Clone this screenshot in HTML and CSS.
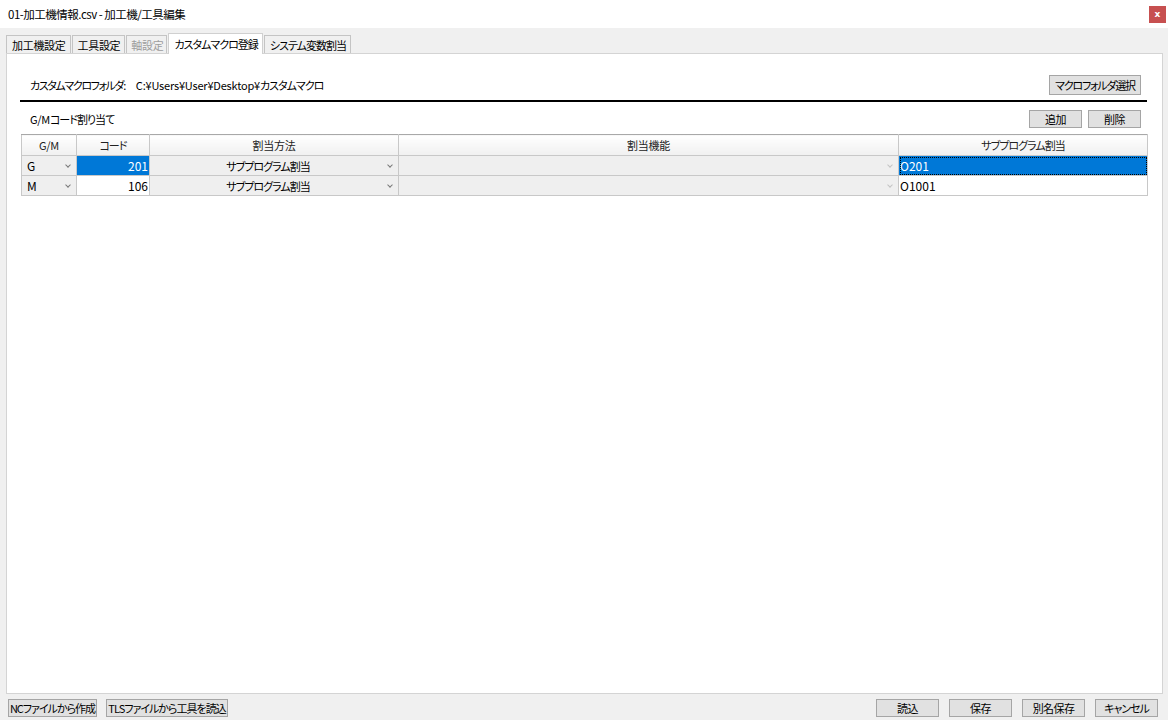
FILE: index.html
```html
<!DOCTYPE html>
<html lang="ja">
<head>
    <meta charset="UTF-8">
    <title>01-加工機情報.csv - 加工機/工具編集</title>
    <link rel="stylesheet" href="styles.css">
</head>
<body>
    <div class="titlebar">
        <span class="title">01-加工機情報.csv - 加工機/工具編集</span>
        <span class="close">x</span>
    </div>

    <div class="tabs">
        <div class="tab">加工機設定</div>
        <div class="tab">工具設定</div>
        <div class="tab disabled">軸設定</div>
        <div class="tab active kana">カスタムマクロ登録</div>
        <div class="tab kana">システム変数割当</div>
    </div>

    <div class="panel">
        <div class="folder-row">
            <span class="folder-label">カスタムマクロフォルダ:</span>
            <span class="folder-path">C:¥Users¥User¥Desktop¥<span class="kana">カスタムマクロ</span></span>
            <button class="btn btn-folder">マクロフォルダ選択</button>
        </div>

        <div class="rule"></div>

        <div class="assign-row">
            <span class="assign-label">G/M<span class="kana">コード割り当て</span></span>
            <button class="btn btn-small">追加</button>
            <button class="btn btn-small">削除</button>
        </div>

        <table class="grid">
            <colgroup>
                <col style="width: 55px">
                <col style="width: 73px">
                <col style="width: 249px">
                <col style="width: 500px">
                <col style="width: 249px">
            </colgroup>
            <thead>
                <tr>
                    <th>G/M</th>
                    <th class="kana">コード</th>
                    <th>割当方法</th>
                    <th>割当機能</th>
                    <th class="kana">サブプログラム割当</th>
                </tr>
            </thead>
            <tbody>
                <tr>
                    <td class="combo left">G<span class="chev"></span></td>
                    <td class="num selected">201</td>
                    <td class="combo kana">サブプログラム割当<span class="chev"></span></td>
                    <td class="combo off"><span class="chev"></span></td>
                    <td class="text selected focus">O201</td>
                </tr>
                <tr>
                    <td class="combo left">M<span class="chev"></span></td>
                    <td class="num">106</td>
                    <td class="combo kana">サブプログラム割当<span class="chev"></span></td>
                    <td class="combo off"><span class="chev"></span></td>
                    <td class="text">O1001</td>
                </tr>
            </tbody>
        </table>
    </div>

    <div class="bottom-bar">
        <button class="btn btn-nc">NCファイルから作成</button>
        <button class="btn btn-tls">TLSファイルから工具を読込</button>
        <div class="spacer"></div>
        <button class="btn btn-action">読込</button>
        <button class="btn btn-action">保存</button>
        <button class="btn btn-action">別名保存</button>
        <button class="btn btn-action kana">キャンセル</button>
    </div>
</body>
</html>
```

FILE: styles.css
```css
body {
    font-family: "Noto Sans CJK JP", "Noto Sans", sans-serif;
    font-size: 11px;
    font-feature-settings: "palt";
    letter-spacing: -0.3px;
    color: #000;
    background-color: #f0f0f0;
    margin: 0;
    padding: 0;
    width: 1168px;
    height: 720px;
    overflow: hidden;
}

.kana {
    letter-spacing: -1px;
}

.titlebar {
    height: 28px;
    background-color: #fff;
    display: flex;
    align-items: center;
    justify-content: space-between;
    padding-left: 8px;
    padding-right: 2px;
}

.title {
    font-size: 11.5px;
    letter-spacing: -0.5px;
}

.close {
    width: 17px;
    height: 17px;
    background-color: #c75050;
    color: #fff;
    font-family: "DejaVu Sans", sans-serif;
    font-size: 9px;
    font-weight: bold;
    letter-spacing: 0;
    display: flex;
    align-items: center;
    justify-content: center;
    line-height: 1;
}

.tabs {
    display: flex;
    align-items: flex-end;
    height: 25px;
    padding-left: 6px;
    position: relative;
    z-index: 1;
}

.tab {
    height: 18px;
    box-sizing: border-box;
    border: 1px solid #c4c4c4;
    border-bottom: none;
    background-color: #f0f0f0;
    padding: 0 4px 0 5px;
    margin-right: 1px;
    display: flex;
    align-items: center;
    font-size: 11px;
    white-space: nowrap;
}

.tab.disabled {
    color: #9d9d9d;
    padding: 0 3px 0 4px;
}

.tab.active {
    height: 21px;
    background-color: #fff;
    border-color: #d0d0d0;
    margin-bottom: -1px;
    padding-bottom: 1px;
}

.panel {
    height: 641px;
    box-sizing: border-box;
    margin: 0 5px 0 6px;
    border: 1px solid #d4d4d4;
    background-color: #fff;
    padding: 21px 15px 0 13px;
}

.folder-row {
    display: flex;
    align-items: center;
    height: 20px;
    padding: 0 6px 0 10px;
}

.folder-label {
    margin-right: 11px;
    letter-spacing: -1.4px;
}

.folder-path {
    flex: 1;
    letter-spacing: -0.2px;
}

.btn {
    font-family: inherit;
    font-size: 11px;
    font-feature-settings: "palt";
    letter-spacing: -0.6px;
    white-space: nowrap;
    overflow: hidden;
    color: #000;
    background-color: #e1e1e1;
    border: 1px solid #a5a5a5;
    border-radius: 0;
    padding: 0;
    height: 18px;
    line-height: 15px;
}

.btn.kana {
    letter-spacing: -1px;
}

.btn-folder {
    width: 92px;
    height: 20px;
    letter-spacing: -1.2px;
}

.rule {
    margin-top: 5px;
    height: 2px;
    background-color: #000;
}

.assign-row {
    display: flex;
    align-items: center;
    gap: 6px;
    height: 18px;
    margin-top: 8px;
    padding: 0 6px 0 10px;
}

.assign-label {
    flex: 1;
}

.btn-small {
    width: 53px;
}

.grid {
    margin-top: 6px;
    margin-left: 1px;
    border-collapse: collapse;
    table-layout: fixed;
    width: 1126px;
    border: 1px solid #a8a8a8;
}

.grid th {
    height: 20px;
    padding: 0;
    font-weight: normal;
    text-align: center;
    color: #222;
    background: linear-gradient(#ffffff, #f0f0f0);
    border: 1px solid #c8c8c8;
    border-top: 1px solid #a8a8a8;
}

.grid td {
    height: 19px;
    padding: 0;
    border: 1px solid #c8c8c8;
    position: relative;
    white-space: nowrap;
}

.grid td.combo {
    background-color: #efefef;
    text-align: center;
    padding-right: 12px;
}

.grid td.combo.left {
    text-align: left;
    padding-left: 5px;
    font-size: 12px;
}

.grid td.num {
    text-align: right;
    padding-right: 1px;
    font-size: 12px;
    letter-spacing: 0;
}

.grid td.text {
    padding-left: 1px;
    font-size: 12px;
    letter-spacing: 0;
}

.grid td.selected {
    background-color: #0078d7;
    color: #fff;
}

.grid td.focus {
    outline: 1px dotted #000;
    outline-offset: -2px;
}

.chev {
    position: absolute;
    right: 6px;
    top: 7px;
    width: 3px;
    height: 3px;
    border-right: 1px solid #7a7a7a;
    border-bottom: 1px solid #7a7a7a;
    transform: rotate(45deg);
}

.combo.off .chev {
    border-color: #c4c4c4;
}

.bottom-bar {
    display: flex;
    align-items: center;
    padding: 5px 10px 0 8px;
    gap: 9px;
}

.spacer {
    flex: 1;
}

.btn-nc {
    width: 89px;
    letter-spacing: -1px;
}

.btn-tls {
    width: 122px;
    letter-spacing: -1px;
}

.btn-action {
    width: 63px;
    margin-left: 1px;
}
```
